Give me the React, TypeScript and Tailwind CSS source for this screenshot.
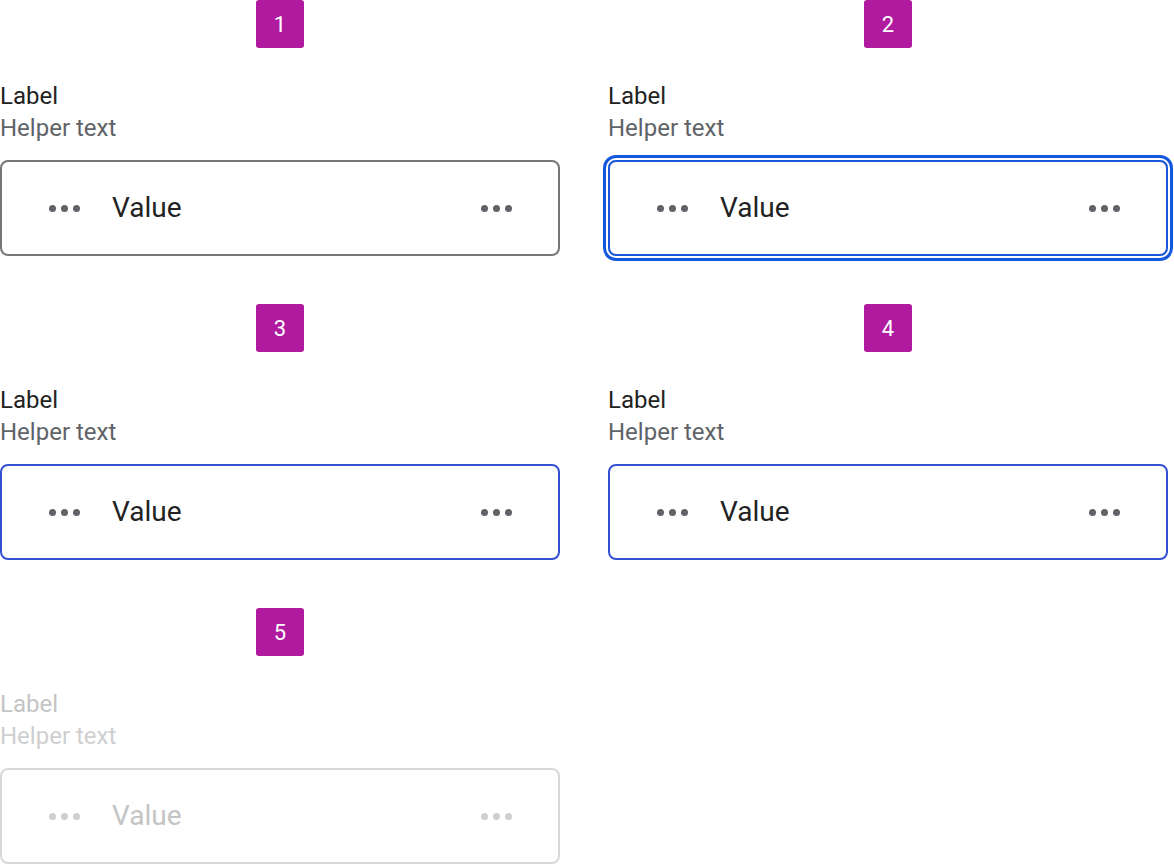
import React from 'react';

type FieldState = 'default' | 'focus' | 'active' | 'hover' | 'disabled';

const Dots = ({ disabled }: { disabled?: boolean }) => (
  <div className="w-8 h-8 flex items-center justify-center gap-[5px]">
    {[0, 1, 2].map((i) => (
      <span key={i} className={`w-[7px] h-[7px] rounded-full ${disabled ? 'bg-[#cfcfcf]' : 'bg-[#5f6368]'}`} />
    ))}
  </div>
);

const Badge = ({ n }: { n: number }) => (
  <div className="flex justify-center">
    <div className="w-12 h-12 rounded-[3px] bg-[#b01a9f] text-white text-[22px] flex items-center justify-center">
      {n}
    </div>
  </div>
);

const Field = ({ n, state }: { n: number; state: FieldState }) => {
  const disabled = state === 'disabled';

  const boxStyles: Record<FieldState, string> = {
    default: 'border-2 border-[#767676]',
    focus: 'border-2 border-[#1d56d8] shadow-[0_0_0_2px_#ffffff,0_0_0_5px_#1558e0]',
    active: 'border-2 border-[#3452d2]',
    hover: 'border-2 border-[#3452d2]',
    disabled: 'border-2 border-[#d8d8d8]',
  };

  return (
    <div className="flex flex-col">
      <Badge n={n} />
      <div className={`mt-8 text-[24px] leading-8 ${disabled ? 'text-[#c4c4c4]' : 'text-[#222222]'}`}>Label</div>
      <div className={`text-[24px] leading-8 ${disabled ? 'text-[#cfcfcf]' : 'text-[#5f6368]'}`}>Helper text</div>
      <div className={`mt-4 h-24 rounded-lg flex items-center pl-[46px] pr-[46px] gap-8 ${boxStyles[state]}`}>
        <Dots disabled={disabled} />
        <span className={`flex-1 text-[28px] ${disabled ? 'text-[#c4c4c4]' : 'text-[#222222]'}`}>Value</span>
        <Dots disabled={disabled} />
      </div>
    </div>
  );
};

export default function App() {
  return (
    <div className="w-[1174px] h-[864px] bg-white overflow-hidden" style={{ fontFamily: 'Roboto, "Noto Sans", sans-serif' }}>
      <div className="grid grid-cols-[560px_560px] gap-x-12 gap-y-12">
        <Field n={1} state="default" />
        <Field n={2} state="focus" />
        <Field n={3} state="active" />
        <Field n={4} state="hover" />
        <Field n={5} state="disabled" />
      </div>
    </div>
  );
}
